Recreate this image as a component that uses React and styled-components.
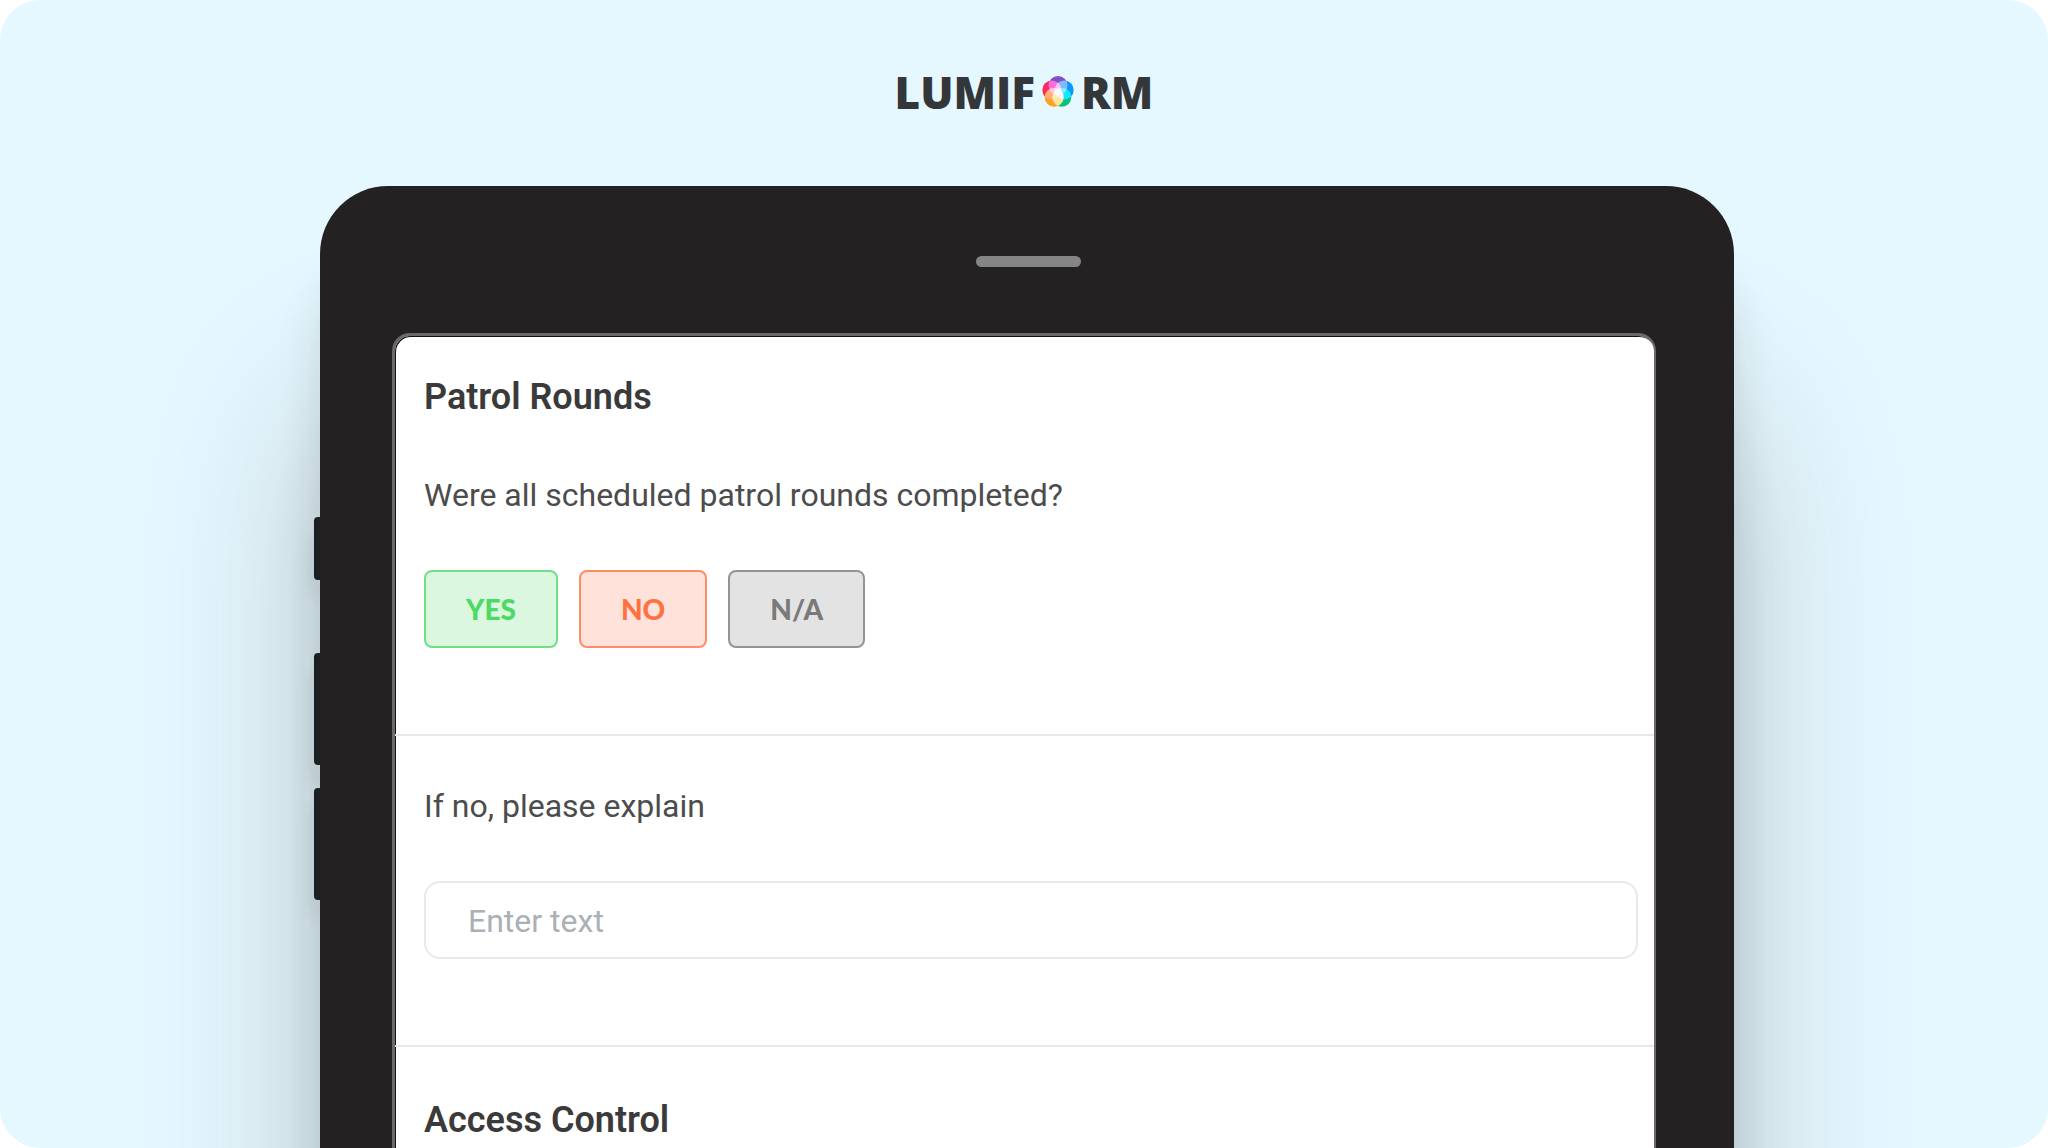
import React from "react";
import styled, { createGlobalStyle } from "styled-components";

const GlobalStyle = createGlobalStyle`
  *, *::before, *::after { box-sizing: border-box; }
  body {
    margin: 0;
    background: #ffffff;
    font-family: Roboto, "Liberation Sans", sans-serif;
    color: #3c3c3c;
  }
`;

const Page = styled.main`
  display: flex;
  flex-direction: column;
  align-items: center;
  height: 100vh;
  overflow: hidden;
  border-radius: 40px;
  background: #e6f8ff;
`;

const Brand = styled.header`
  display: flex;
  align-items: center;
  justify-content: center;
  gap: 6px;
  flex: none;
  height: 186px;
  padding-bottom: 2px;
  color: #33373a;
  font: 800 44px/52px "Open Sans", Lato, sans-serif;
`;

const Mark = styled.svg`
  width: 34px;
  height: 34px;
  isolation: isolate;
  circle { mix-blend-mode: screen; }
`;

const Tablet = styled.div`
  display: flex;
  flex: 1;
  width: 100%;
  max-width: 1420px;
  min-height: 0;
  margin-bottom: -300px;
`;

const SideKeys = styled.div`
  display: flex;
  flex-direction: column;
  flex: none;
  width: 6px;
  padding-top: 331px;
`;

const SideKey = styled.span`
  height: ${(p) => p.$size}px;
  margin-bottom: ${(p) => p.$space}px;
  border-radius: 4px 0 0 4px;
  background: #1c2022;
  box-shadow: 0 16px 20px rgba(36, 33, 34, 0.16);
`;

const Body = styled.div`
  display: flex;
  flex-direction: column;
  flex: 1;
  min-width: 0;
  padding: 70px 78px 0 72px;
  border-radius: 68px 68px 0 0;
  background: #242122;
  box-shadow: 0 80px 50px -8px rgba(36, 33, 34, 0.18),
    0 220px 170px rgba(36, 33, 34, 0.26);
`;

const Speaker = styled.span`
  flex: none;
  align-self: center;
  width: 105px;
  height: 11px;
  margin: 0 0 66px 8px;
  border-radius: 6px;
  background: #858585;
`;

const Screen = styled.form`
  flex: 1;
  border: solid #6b696a;
  border-width: 3px 2px 0 3px;
  border-radius: 18px 18px 0 0;
  background: #ffffff;
  box-shadow: inset 1px 1px 0 #111111;
`;

const Section = styled.section`
  display: flex;
  flex-direction: column;
  gap: 55px;
  padding: ${(p) => p.$top}px 16px 86px 29px;
  border-bottom: 2px solid #e8e8e8;
`;

const Title = styled.h2`
  margin: 0;
  font-size: 36px;
  line-height: 46px;
  font-weight: 600;
  color: #3a3a3a;
`;

const Question = styled.label`
  font-size: 32px;
  line-height: 40px;
  color: #4c4c4c;
`;

const Answers = styled.div`
  display: flex;
  gap: 21px;
`;

const tones = {
  yes: ["#4cd964", "#dcf7e0", "#70df88"],
  no: ["#ff7043", "#ffe2da", "#ff8c69"],
  na: ["#7a7a7a", "#e3e3e3", "#949494"],
};

const Answer = styled.button`
  height: 78px;
  padding: 0 40px;
  border: 2px solid ${(p) => tones[p.$tone][2]};
  border-radius: 8px;
  background: ${(p) => tones[p.$tone][1]};
  color: ${(p) => tones[p.$tone][0]};
  font: 900 28px/36px Lato, "Open Sans", sans-serif;
`;

const TextBox = styled.input`
  width: 100%;
  height: 78px;
  padding: 2px 42px 0;
  border: 2px solid #e8e8e8;
  border-radius: 16px;
  background: #ffffff;
  color: #4c4c4c;
  font: 400 32px/40px Roboto, "Liberation Sans", sans-serif;
  outline: none;
  &::placeholder { color: #abb0b7; opacity: 1; }
`;

function Logo() {
  return (
    <Brand aria-label="Lumiform">
      <span>LUMIF</span>
      <Mark viewBox="0 0 34 34" aria-hidden="true">
        <circle cx="17" cy="10.5" r="9.5" fill="#7e4fc8" />
        <circle cx="23.2" cy="15" r="9.5" fill="#0a98fa" />
        <circle cx="20.8" cy="22.3" r="9.5" fill="#06c080" />
        <circle cx="13.2" cy="22.3" r="9.5" fill="#ffa022" />
        <circle cx="10.8" cy="15" r="9.5" fill="#fa2a5c" />
      </Mark>
      <span>RM</span>
    </Brand>
  );
}

export default function App() {
  return (
    <>
      <GlobalStyle />
      <Page>
        <Logo />
        <Tablet>
          <SideKeys>
            <SideKey $size={63} $space={73} />
            <SideKey $size={112} $space={23} />
            <SideKey $size={112} $space={0} />
          </SideKeys>
          <Body>
            <Speaker />
            <Screen onSubmit={(e) => e.preventDefault()}>
              <Section $top={38}>
                <Title>Patrol Rounds</Title>
                <Question as="div" id="rounds">
                  Were all scheduled patrol rounds completed?
                </Question>
                <Answers role="group" aria-labelledby="rounds">
                  <Answer type="button" $tone="yes">YES</Answer>
                  <Answer type="button" $tone="no">NO</Answer>
                  <Answer type="button" $tone="na">N/A</Answer>
                </Answers>
              </Section>
              <Section $top={50}>
                <Question htmlFor="explain">If no, please explain</Question>
                <TextBox id="explain" type="text" placeholder="Enter text" />
              </Section>
              <Section $top={50}>
                <Title>Access Control</Title>
              </Section>
            </Screen>
          </Body>
        </Tablet>
      </Page>
    </>
  );
}
